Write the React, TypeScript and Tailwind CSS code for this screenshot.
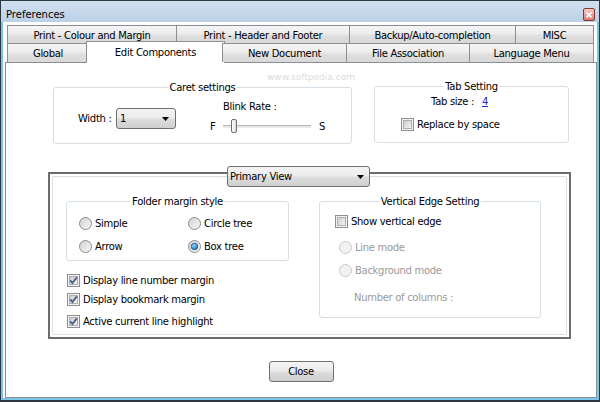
import React from "react";

const tabBg = "bg-[linear-gradient(#f5f5f5,#ededed_45%,#e0e0e0_55%,#d8d8d8)]";
const btnBg = "bg-[linear-gradient(#f4f4f4,#ebebeb_48%,#dddddd_52%,#cfcfcf)]";

const row1 = [
  { label: "Print - Colour and Margin", w: "w-[170px]" },
  { label: "Print - Header and Footer", w: "w-[174px]" },
  { label: "Backup/Auto-completion", w: "w-[167px]" },
  { label: "MISC", w: "w-[79px]" },
];

function Check({ checked = false }: { checked?: boolean }) {
  return (
    <svg width="13" height="13" viewBox="0 0 13 13" className="shrink-0">
      <defs>
        <linearGradient id="cbg" x1="0" y1="0" x2="1" y2="1">
          <stop offset="0" stopColor="#cbcbcb" />
          <stop offset="1" stopColor="#f6f6f6" />
        </linearGradient>
      </defs>
      <rect x="0.5" y="0.5" width="12" height="12" fill="#f3f3f3" stroke="#8e8f8f" />
      <rect x="2.5" y="2.5" width="8" height="8" fill="url(#cbg)" stroke="#aeaeae" />
      {checked && <path d="M3.2 6.4 L5.4 9 L9.8 3.4" fill="none" stroke="#4b5f8a" strokeWidth="1.8" />}
    </svg>
  );
}

function Radio({ on = false, disabled = false }: { on?: boolean; disabled?: boolean }) {
  return (
    <svg width="13" height="13" viewBox="0 0 13 13" className="shrink-0">
      <defs>
        <linearGradient id="rbg" x1="0" y1="0" x2="1" y2="1">
          <stop offset="0" stopColor="#cfcfcf" />
          <stop offset="1" stopColor="#fafafa" />
        </linearGradient>
        <radialGradient id="rdot" cx="0.4" cy="0.35" r="0.75">
          <stop offset="0" stopColor="#8fd8fa" />
          <stop offset="1" stopColor="#0f5ea6" />
        </radialGradient>
      </defs>
      <circle
        cx="6.5"
        cy="6.5"
        r="6"
        fill={disabled ? "#f2f2f2" : "url(#rbg)"}
        stroke={disabled ? "#c9c9c9" : "#8c8c8c"}
      />
      {on && <circle cx="6.5" cy="6.5" r="3.3" fill="url(#rdot)" stroke="#1c4c7c" strokeWidth="0.7" />}
    </svg>
  );
}

function Arrow() {
  return (
    <svg width="7" height="4" viewBox="0 0 7 4" className="shrink-0">
      <path d="M0 0 H7 L3.5 4 Z" fill="#000" />
    </svg>
  );
}

function Group({ title, className, children }: { title: string; className: string; children?: React.ReactNode }) {
  return (
    <div className={`relative rounded-[3px] border border-[#d5dfe5] ${className}`}>
      <span className="absolute -top-[7px] left-1/2 -translate-x-1/2 whitespace-nowrap bg-white px-[2px] leading-[13px]">
        {title}
      </span>
      {children}
    </div>
  );
}

export default function App() {
  return (
    <div className="h-[402px] w-[600px] overflow-hidden bg-[#2c3742] p-[1px] pb-[2px] font-['DejaVu_Sans',Verdana,sans-serif] text-[10px] leading-[13px] tracking-[-0.3px] text-black">
      <div className="flex h-full flex-col bg-[#7cc4e8]">
        {/* title bar */}
        <div className="flex h-[21px] shrink-0 items-center justify-between bg-[linear-gradient(#d1e0ef,#bbd0e7)] pl-[5px] pr-[4px] pt-[6px]">
          <span className="tracking-normal">Preferences</span>
          <span className="flex h-[13px] w-[12px] items-center justify-center rounded-[2px] border border-[#85372f] bg-[linear-gradient(#f3cbc5,#d67d71)]">
            <svg width="6" height="6" viewBox="0 0 6 6">
              <path d="M0.5 0.5 L5.5 5.5 M5.5 0.5 L0.5 5.5" stroke="#ffffff" strokeWidth="1.6" />
            </svg>
          </span>
        </div>

        <div className="mx-[2px] mb-[2px] flex flex-1 flex-col bg-white pt-[3px]">
          {/* tabs */}
          <div className="relative z-10 ml-[4px]">
            <div className="flex h-[18px]">
              {row1.map((t, i) => (
                <div
                  key={t.label}
                  className={`${t.w} ${i ? "-ml-px" : ""} flex h-[18px] items-center justify-center border border-b-0 border-[#8c8e94] pt-px ${tabBg}`}
                >
                  {t.label}
                </div>
              ))}
            </div>
            <div className="flex h-[19px] items-start">
              <div className={`flex h-[19px] w-[82px] items-center justify-center border border-b-0 border-[#8c8e94] pt-px ${tabBg}`}>
                Global
              </div>
              <div className="-ml-[3px] -mt-[2px] flex h-[22px] w-[139px] justify-center border border-b-0 border-[#8c8e94] bg-white pt-[4px]">
                Edit Components
              </div>
              <div className={`-ml-[3px] flex h-[19px] w-[125px] items-center justify-center border border-b-0 border-[#8c8e94] pt-px ${tabBg}`}>
                New Document
              </div>
              <div className={`-ml-px flex h-[19px] w-[124px] items-center justify-center border border-b-0 border-[#8c8e94] pt-px ${tabBg}`}>
                File Association
              </div>
              <div className={`-ml-px flex h-[19px] w-[125px] items-center justify-center border border-b-0 border-[#8c8e94] pt-px ${tabBg}`}>
                Language Menu
              </div>
            </div>
          </div>

          {/* panel */}
          <div className="relative ml-[2px] flex flex-1 flex-col border border-[#8c8e94]">
            <span className="pointer-events-none absolute left-[261px] top-[8px] text-[9px] tracking-normal text-[#dcdcdc]">
              www.softpedia.com
            </span>

            <div className="ml-[47px] mt-[24px] flex items-start">
              <Group title="Caret settings" className="h-[57px] w-[299px]">
                <div className="flex items-start pl-[24px]">
                  <div className="mt-[20px] flex items-center">
                    <span className="w-[38px]">Width :</span>
                    <div className={`flex h-[21px] w-[60px] items-center justify-between rounded-[3px] border border-[#707070] pl-[3px] pr-[6px] ${btnBg}`}>
                      <span>1</span>
                      <Arrow />
                    </div>
                  </div>
                  <div className="ml-[34px] mt-[12px] flex flex-col">
                    <span className="pl-[13px] leading-[14px]">Blink Rate :</span>
                    <div className="mt-[5px] flex h-[14px] items-center">
                      <span className="w-[13px]">F</span>
                      <div className="relative h-[14px] w-[88px]">
                        <div className="absolute left-0 right-0 top-[6px] h-[3px] border-t border-[#b5b5b5] bg-[#e9e9e9]" />
                        <div className="absolute left-[8px] top-0 h-[14px] w-[6px] rounded-[2px] border border-[#707070] bg-[linear-gradient(90deg,#ffffff,#dcdcdc)]" />
                      </div>
                      <span className="ml-[8px]">S</span>
                    </div>
                  </div>
                </div>
              </Group>

              <Group title="Tab Setting" className="-mt-px ml-[22px] h-[57px] w-[195px]">
                <div className="ml-[56px] mt-[8px] flex leading-[14px]">
                  <span>Tab size :</span>
                  <span className="ml-[8px] text-[#2424d4] underline">4</span>
                </div>
                <div className="ml-[26px] mt-[9px] flex items-center gap-[3px]">
                  <Check />
                  <span>Replace by space</span>
                </div>
              </Group>
            </div>

            <div className="relative ml-[42px] mt-[28px] h-[167px] w-[523px] border-2 border-[#6c6c6c] p-[2px]">
              <div className="flex h-full rounded-[2px] border border-[#d8e0e6] pl-[13px] pt-[24px]">
                <div className="flex w-[223px] flex-col">
                  <Group title="Folder margin style" className="h-[60px] w-[223px]">
                    <div className="grid grid-cols-[109px_auto] gap-y-[10px] pl-[12px] pt-[15px]">
                      <div className="flex h-[13px] items-center gap-[3px]">
                        <Radio />
                        <span>Simple</span>
                      </div>
                      <div className="flex h-[13px] items-center gap-[3px]">
                        <Radio />
                        <span>Circle tree</span>
                      </div>
                      <div className="flex h-[13px] items-center gap-[3px]">
                        <Radio />
                        <span>Arrow</span>
                      </div>
                      <div className="flex h-[13px] items-center gap-[3px]">
                        <Radio on />
                        <span>Box tree</span>
                      </div>
                    </div>
                  </Group>
                  <div className="ml-px mt-[13px] flex h-[13px] items-center gap-[3px]">
                    <Check checked />
                    <span>Display line number margin</span>
                  </div>
                  <div className="ml-px mt-[6px] flex h-[13px] items-center gap-[3px]">
                    <Check checked />
                    <span>Display bookmark margin</span>
                  </div>
                  <div className="ml-px mt-[9px] flex h-[13px] items-center gap-[3px]">
                    <Check checked />
                    <span>Active current line highlight</span>
                  </div>
                </div>

                <Group title="Vertical Edge Setting" className="ml-[30px] h-[117px] w-[222px]">
                  <div className="ml-[15px] mt-[13px] flex h-[13px] items-center gap-[3px]">
                    <Check />
                    <span>Show vertical edge</span>
                  </div>
                  <div className="ml-[19px] mt-[13px] flex h-[13px] items-center gap-[3px] text-[#9a9a9a]">
                    <Radio disabled />
                    <span>Line mode</span>
                  </div>
                  <div className="ml-[19px] mt-[10px] flex h-[13px] items-center gap-[3px] text-[#9a9a9a]">
                    <Radio disabled />
                    <span>Background mode</span>
                  </div>
                  <div className="ml-[34px] mt-[14px] leading-[14px] text-[#9a9a9a]">Number of columns :</div>
                </Group>
              </div>

              <div className={`absolute -top-[8px] left-[177px] flex h-[21px] w-[143px] items-center justify-between rounded-[3px] border border-[#707070] pl-[2px] pr-[5px] ${btnBg}`}>
                <span>Primary View</span>
                <Arrow />
              </div>
            </div>

            <div className={`mx-auto mt-[22px] flex h-[21px] w-[65px] items-center justify-center rounded-[3px] border border-[#707070] ${btnBg}`}>
              Close
            </div>
          </div>
        </div>
      </div>
    </div>
  );
}
